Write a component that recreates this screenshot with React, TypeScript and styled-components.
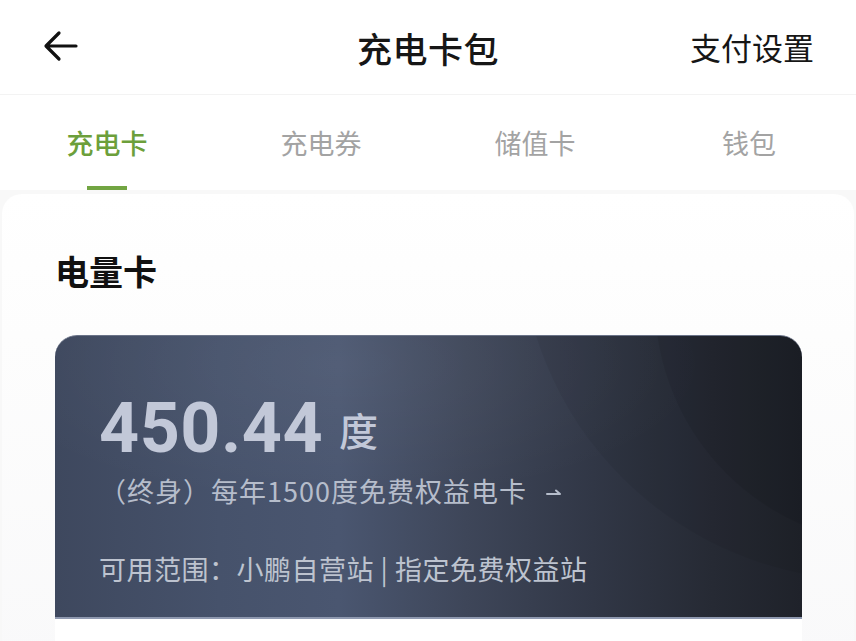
import React from "react";
import styled, { createGlobalStyle } from "styled-components";

const GlobalStyle = createGlobalStyle`
  html, body {
    margin: 0;
    padding: 0;
    background: #f8f8f8;
    font-family: "Noto Sans CJK SC", "Noto Sans", sans-serif;
  }
  * { box-sizing: border-box; }
`;

const Page = styled.div`
  width: 856px;
  height: 641px;
  overflow: hidden;
  background: #f8f8f8;
`;

const Header = styled.div`
  height: 95px;
  background: #fff;
  display: grid;
  grid-template-columns: 1fr auto 1fr;
  align-items: center;
  padding: 0 42px 0 42px;
  border-bottom: 1px solid #f3f3f3;
`;

const BackButton = styled.div`
  display: flex;
  align-items: center;
  height: 40px;
  margin-top: -2px;
`;

const Title = styled.div`
  font-size: 35px;
  font-weight: 500;
  color: #161616;
  letter-spacing: 0.5px;
`;

const HeaderAction = styled.div`
  justify-self: end;
  font-size: 31px;
  color: #161616;
  margin-top: -1px;
`;

const Tabs = styled.div`
  height: 95px;
  background: #fff;
  display: grid;
  grid-template-columns: repeat(4, 1fr);
`;

const Tab = styled.div<{ active?: boolean }>`
  display: flex;
  flex-direction: column;
  align-items: center;
  padding-top: 29px;
  font-size: 27px;
  line-height: 38px;
  font-weight: ${(p) => (p.active ? 500 : 400)};
  color: ${(p) => (p.active ? "#6c9f3b" : "#a3a3a3")};
`;

const Indicator = styled.div`
  margin-top: auto;
  width: 40px;
  height: 4px;
  background: #72a542;
`;

const Content = styled.div`
  margin: 4px 2px 0;
  height: 470px;
  border-radius: 20px;
  background: linear-gradient(180deg, #ffffff 0%, #fdfdfd 30%, #f9f9fa 100%);
  padding: 53px 52px 0 53px;
`;

const SectionTitle = styled.div`
  font-size: 34px;
  line-height: 48px;
  font-weight: 600;
  color: #111;
  margin-bottom: 40px;
`;

const Card = styled.div`
  position: relative;
  overflow: hidden;
  border-radius: 22px 22px 0 0;
  padding: 58px 44px 30px;
  background: linear-gradient(
    90deg,
    #3e485e 0%,
    #46526b 22%,
    #4a5670 38%,
    #3e4659 55%,
    #313746 72%,
    #262a34 88%,
    #1f222a 100%
  );
  border-top: 1px solid #6a7388;
  border-bottom: 2px solid #8f99b0;
`;

const Decor = styled.svg`
  position: absolute;
  inset: 0;
  width: 100%;
  height: 100%;
  pointer-events: none;
`;

const AmountRow = styled.div`
  position: relative;
  display: flex;
  align-items: center;
  gap: 16px;
  color: #c2c8d8;
`;

const Amount = styled.span`
  font-family: Roboto, "Liberation Sans", sans-serif;
  font-size: 70px;
  line-height: 68px;
  font-weight: 700;
  letter-spacing: 0.5px;
`;

const Unit = styled.span`
  font-size: 39px;
  line-height: 50px;
  font-weight: 500;
  margin-top: 2px;
`;

const Benefit = styled.div`
  position: relative;
  display: flex;
  align-items: center;
  gap: 18px;
  margin-top: 11px;
  font-size: 27px;
  line-height: 36px;
  letter-spacing: 1px;
  color: #b6bdcb;
`;

const Scope = styled.div`
  position: relative;
  margin-top: 42px;
  font-size: 27px;
  line-height: 36px;
  letter-spacing: 0.5px;
  color: #bdc3cf;
`;

const CardBody = styled.div`
  height: 60px;
  background: #fff;
`;

const Arrow = () => (
  <svg width="18" height="14" viewBox="0 0 18 14">
    <path d="M2 10 L15 10 L11 6.5" fill="none" stroke="#b6bdcb" strokeWidth="2" strokeLinecap="round" strokeLinejoin="round" />
  </svg>
);

const tabs = ["充电卡", "充电券", "储值卡", "钱包"];

export default function App() {
  return (
    <Page>
      <GlobalStyle />
      <Header>
        <BackButton>
          <svg width="36" height="32" viewBox="0 0 36 32">
            <path d="M34 16 H5 M17 3 L4 16 L17 29" fill="none" stroke="#111" strokeWidth="3.2" strokeLinecap="round" strokeLinejoin="round" />
          </svg>
        </BackButton>
        <Title>充电卡包</Title>
        <HeaderAction>支付设置</HeaderAction>
      </Header>
      <Tabs>
        {tabs.map((t, i) => (
          <Tab key={t} active={i === 0}>
            {t}
            {i === 0 && <Indicator />}
          </Tab>
        ))}
      </Tabs>
      <Content>
        <SectionTitle>电量卡</SectionTitle>
        <Card>
          <Decor viewBox="0 0 747 282" preserveAspectRatio="none">
            <defs>
              <radialGradient id="glow" cx="0.38" cy="0.1" r="0.5">
                <stop offset="0" stopColor="#ffffff" stopOpacity="0.05" />
                <stop offset="1" stopColor="#ffffff" stopOpacity="0" />
              </radialGradient>
            </defs>
            <rect x="0" y="0" width="747" height="282" fill="url(#glow)" />
            <circle cx="815" cy="-105" r="350" fill="#000" fillOpacity="0.05" />
            <circle cx="845" cy="-35" r="245" fill="#000" fillOpacity="0.07" />
          </Decor>
          <AmountRow>
            <Amount>450.44</Amount>
            <Unit>度</Unit>
          </AmountRow>
          <Benefit>
            <span>（终身）每年1500度免费权益电卡</span>
            <Arrow />
          </Benefit>
          <Scope>可用范围：小鹏自营站 | 指定免费权益站</Scope>
        </Card>
        <CardBody />
      </Content>
    </Page>
  );
}
